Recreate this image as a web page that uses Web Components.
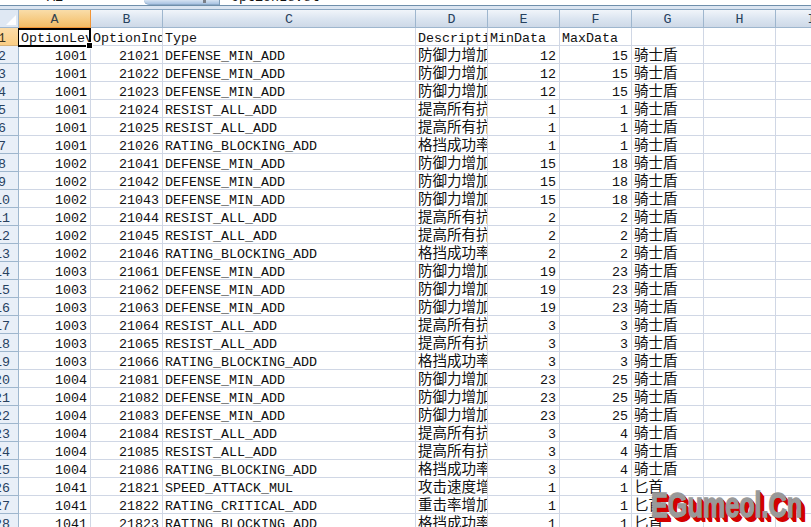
<!DOCTYPE html>
<html>
<head>
<meta charset="utf-8">
<style>
  html, body { margin: 0; padding: 0; background: #fff; }
  body { width: 811px; height: 527px; overflow: hidden; position: relative; }
</style>
</head>
<body>
<excel-window>
  <formula-bar slot="bar" name="A1" value="OptionLevel"></formula-bar>
  <sheet-grid slot="sheet"></sheet-grid>
</excel-window>
<site-mark>EGumeol.Cn</site-mark>

<script>
const SHEET_FONT = '"Liberation Mono", "Noto Sans CJK SC", monospace';

class ExcelWindow extends HTMLElement {
  constructor() {
    super();
    this.attachShadow({ mode: 'open' });
    this.shadowRoot.innerHTML = `
      <style>
        :host { display: flex; flex-direction: column; width: 811px; height: 527px; overflow: hidden; }
      </style>
      <slot name="bar"></slot>
      <slot name="sheet"></slot>
    `;
  }
}

class FormulaBar extends HTMLElement {
  constructor() {
    super();
    this.attachShadow({ mode: 'open' });
  }

  connectedCallback() {
    this.shadowRoot.innerHTML = `
      <style>
        :host { display: flex; flex: none; height: 5px; background: #fff; overflow: hidden;
          font: 13.33px/13px ${SHEET_FONT}; color: #111; }
        .name { width: 144px; flex: none; box-sizing: border-box; padding-left: 47px; margin-top: -9px; }
        .btn { width: 75px; flex: none; border-radius: 0 0 0 11px; position: relative;
          background: linear-gradient(#d6e3f2, #a9c3e2); border-bottom: 1px solid #8fabc9; box-sizing: border-box; }
        .btn i { position: absolute; right: 13px; top: 0; width: 3px; height: 3px; background: #7a7f88; }
        .value { flex: 1; border-left: 1px solid #7f9db9; padding-left: 11px; margin-top: -9px; }
      </style>
      <div class="name">${this.getAttribute('name')}</div>
      <div class="btn"><i></i></div>
      <div class="value">${this.getAttribute('value')}</div>
    `;
  }
}

class SheetCell extends HTMLElement {
  constructor() {
    super();
    this.attachShadow({ mode: 'open' });
    this.shadowRoot.innerHTML = `
      <style>
        :host { display: block; box-sizing: border-box; height: 18px; overflow: hidden; white-space: nowrap;
          border-right: 1px solid #d0d7e5; border-bottom: 1px solid #d0d7e5; padding: 0 1px 0 2px; line-height: 22px; }
        :host([num]) { text-align: right; padding-right: 3px; }
        :host([cjk]) { font-size: 14.5px; line-height: 21px; }
      </style>
      <slot></slot>
    `;
  }
}

class SheetRow extends HTMLElement {
  constructor() {
    super();
    this.attachShadow({ mode: 'open' });
    this.shadowRoot.innerHTML = `
      <style>
        :host { display: grid; grid-template-columns: var(--cols); height: 18px; overflow: hidden; }
        .head { box-sizing: border-box; height: 18px; overflow: hidden; background: #e9eff8;
          border-right: 1px solid #9eb6ce; border-bottom: 1px solid #9eb6ce; color: #27415f; }
        :host([active]) .head { background: linear-gradient(#fcdca8, #fbce85); border-right-color: #f29536; border-bottom-color: #d6b27a; color: #3b3320; }
        .head span { display: block; width: 26px; margin-left: -11px; text-align: center; line-height: 21px; }
      </style>
      <div class="head"><span></span></div>
      <slot></slot>
    `;
  }

  connectedCallback() {
    this.shadowRoot.querySelector('span').textContent = this.getAttribute('index');
  }
}

class ColumnHeader extends HTMLElement {
  constructor() {
    super();
    this.attachShadow({ mode: 'open' });
    this.shadowRoot.innerHTML = `
      <style>
        :host { display: block; box-sizing: border-box; height: 18px; text-align: center; line-height: 19px;
          overflow: hidden; color: #27415f;
          background: linear-gradient(#f1f5fa, #dae4f0 55%, #ced9e7);
          border-right: 1px solid #9eb6ce; border-bottom: 1px solid #9eb6ce; }
        :host([active]) { background: linear-gradient(#f9dda9, #f6cb83 55%, #f1bb66);
          border-right-color: #f29536; border-bottom-color: #f29536; color: #33424f; }
      </style>
      <slot></slot>
    `;
  }
}

class SheetGrid extends HTMLElement {
  constructor() {
    super();
    this.attachShadow({ mode: 'open' });
  }

  connectedCallback() {
    const DEF = ['DEFENSE_MIN_ADD', '防御力增加'];
    const RES = ['RESIST_ALL_ADD', '提高所有抗'];
    const BLK = ['RATING_BLOCKING_ADD', '格挡成功率'];
    const SPD = ['SPEED_ATTACK_MUL', '攻击速度增'];
    const CRT = ['RATING_CRITICAL_ADD', '重击率增加'];

    const rows = [['OptionLevel', 'OptionIndex', 'Type', 'Description', 'MinData', 'MaxData', '']];
    const add = (level, index, kind, min, max, item) => {
      rows.push([level, index, kind[0], kind[1], min, max, item]);
    };
    // four shield tiers, same six option shape each
    [[1001, 21021, 12, 15, 1, 1, 1, 1], [1002, 21041, 15, 18, 2, 2, 2, 2],
     [1003, 21061, 19, 23, 3, 3, 3, 3], [1004, 21081, 23, 25, 3, 4, 3, 4]].forEach(t => {
      [DEF, DEF, DEF].forEach((k, i) => add(t[0], t[1] + i, k, t[2], t[3], '骑士盾'));
      add(t[0], t[1] + 3, RES, t[4], t[5], '骑士盾');
      add(t[0], t[1] + 4, RES, t[4], t[5], '骑士盾');
      add(t[0], t[1] + 5, BLK, t[6], t[7], '骑士盾');
    });
    add(1041, 21821, SPD, 1, 1, '匕首');
    add(1041, 21822, CRT, 1, 1, '匕首');
    add(1041, 21823, BLK, 1, 1, '匕首');

    const cols = ['A', 'B', 'C', 'D', 'E', 'F', 'G', 'H', 'I']
      .map((c, i) => `<column-header ${i === 0 ? 'active' : ''}>${c}</column-header>`).join('');

    const body = rows.map((r, i) => {
      const cells = r.map(v => {
        const num = typeof v === 'number';
        const cjk = /[^\x00-\x7f]/.test(String(v));
        return `<sheet-cell ${num ? 'num' : ''} ${cjk ? 'cjk' : ''}>${v}</sheet-cell>`;
      }).join('');
      return `<sheet-row index="${i + 1}" ${i === 0 ? 'active' : ''}>${cells}<sheet-cell></sheet-cell><sheet-cell></sheet-cell></sheet-row>`;
    }).join('');

    this.shadowRoot.innerHTML = `
      <style>
        :host { display: block; flex: 1; position: relative; overflow: hidden;
          --cols: 19px 72px 72px 253px 72px 72px 72px 72px 72px 72px;
          font: 13.33px/18px ${SHEET_FONT}; color: #111; background: #fff; }
        .chrome { height: 5px; box-sizing: border-box; background: #dbe5f1;
          border-top: 1px solid #6f8fab; border-bottom: 1px solid #8aa6c1; }
        .cols { display: grid; grid-template-columns: var(--cols); height: 18px; overflow: hidden; }
        .corner { box-sizing: border-box; position: relative; background: #dfe8f3;
          border-right: 1px solid #9eb6ce; border-bottom: 1px solid #9eb6ce; }
        .corner::after { content: ""; position: absolute; right: 2px; bottom: 2px; border-style: solid;
          border-width: 0 0 10px 10px; border-color: transparent transparent #fdfeff transparent; }
        .cursor { position: absolute; left: 18px; top: 23px; width: 73px; height: 19px; box-sizing: border-box;
          border: 2px solid #000; border-left-width: 1px; pointer-events: none; }
        .cursor::after { content: ""; position: absolute; right: -4px; bottom: -4px; width: 5px; height: 5px;
          background: #000; border: 1px solid #fff; }
      </style>
      <div class="chrome"></div>
      <div class="cols"><div class="corner"></div>${cols}</div>
      ${body}
      <div class="cursor"></div>
    `;
  }
}

class SiteMark extends HTMLElement {
  constructor() {
    super();
    this.attachShadow({ mode: 'open' });
    this.shadowRoot.innerHTML = `
      <style>
        :host { position: absolute; left: 651px; top: 485px; display: block; white-space: nowrap;
          transform: scaleX(0.72); transform-origin: left top;
          font: bold 35px/40px "Liberation Sans", sans-serif; color: #999;
          -webkit-text-stroke: 1.5px #999;
          text-shadow: 2px 1px 0 #d40000, 3px 2px 0 #d40000, 4px 3px 0 #d40000, 5px 4px 0 #d40000, 6px 5px 0 #d40000; }
      </style>
      <slot></slot>
    `;
  }
}

customElements.define('excel-window', ExcelWindow);
customElements.define('formula-bar', FormulaBar);
customElements.define('sheet-cell', SheetCell);
customElements.define('sheet-row', SheetRow);
customElements.define('column-header', ColumnHeader);
customElements.define('sheet-grid', SheetGrid);
customElements.define('site-mark', SiteMark);
</script>
</body>
</html>
